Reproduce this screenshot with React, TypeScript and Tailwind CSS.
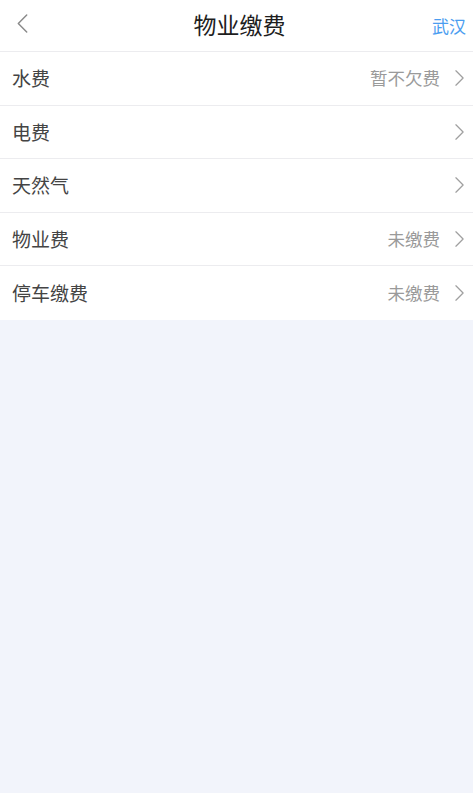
import React from "react";

const rows = [
  { label: "水费", status: "暂不欠费" },
  { label: "电费", status: "" },
  { label: "天然气", status: "" },
  { label: "物业费", status: "未缴费" },
  { label: "停车缴费", status: "未缴费" },
];

const Chevron = ({ className }: { className?: string }) => (
  <svg viewBox="0 0 12 20" className={className} fill="none">
    <path d="M2 2l8 8-8 8" stroke="currentColor" strokeWidth="1.4" strokeLinecap="round" strokeLinejoin="round" />
  </svg>
);

const App = () => {
  return (
    <div
      className="min-h-[793px] w-full bg-[#f2f4fb]"
      style={{ fontFamily: '"Noto Sans CJK SC", "Noto Sans", sans-serif' }}
    >
      <header className="relative flex h-[52px] items-center justify-center border-b border-[#ececef] bg-white">
        <svg viewBox="0 0 12 20" className="absolute left-[16px] top-[13px] h-[21px] w-[13px] text-[#8a8a8a]" fill="none">
          <path d="M10 2L2 10l8 8" stroke="currentColor" strokeWidth="1.4" strokeLinecap="round" strokeLinejoin="round" />
        </svg>
        <h1 className="-mt-[3px] pl-[6px] text-[23px] font-normal text-[#1e1e1e]">物业缴费</h1>
        <span className="absolute right-[7px] top-[13px] text-[17px] text-[#4a9df0]">武汉</span>
      </header>
      <ul className="bg-white">
        {rows.map((r) => (
          <li
            key={r.label}
            className="flex h-[53.5px] items-center border-b border-[#ececef] pl-[12px] pr-[8px] last:border-b-0"
          >
            <span className="flex-1 text-[19px] text-[#444]">{r.label}</span>
            {r.status && <span className="mr-[14px] text-[17.5px] text-[#9a9a9a]">{r.status}</span>}
            <Chevron className="h-[18px] w-[11px] text-[#a0a0a0]" />
          </li>
        ))}
      </ul>
    </div>
  );
};

export default App;
